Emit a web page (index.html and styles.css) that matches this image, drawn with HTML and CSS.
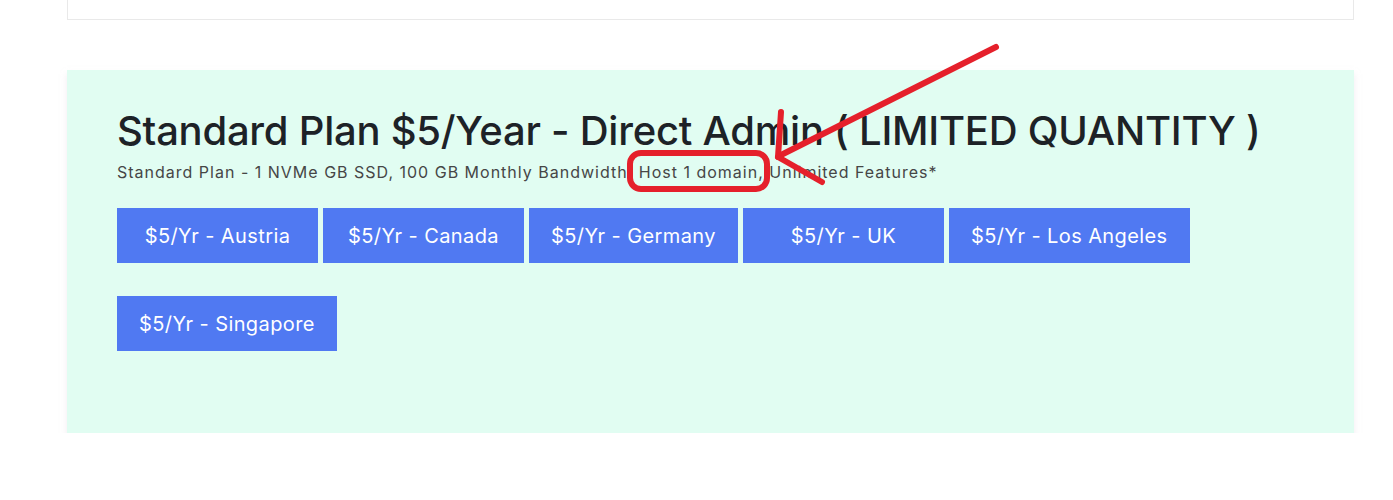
FILE: index.html
```html
<!DOCTYPE html>
<html lang="en">

<head>
    <meta charset="UTF-8">
    <meta name="viewport" content="width=device-width, initial-scale=1.0">
    <link rel="stylesheet" href="styles.css">
    <title>Standard Plan</title>
</head>

<body>

    <div class="top-card"></div>

    <section class="plan">
        <h2 class="plan-title">Standard Plan $5/Year - Direct Admin ( LIMITED QUANTITY )</h2>
        <p class="plan-desc">Standard Plan - 1 NVMe GB SSD, 100 GB Monthly Bandwidth, Host 1 domain, Unlimited Features*</p>

        <div class="locations">
            <a class="loc-btn" href="#">$5/Yr - Austria</a>
            <a class="loc-btn" href="#">$5/Yr - Canada</a>
            <a class="loc-btn" href="#">$5/Yr - Germany</a>
            <a class="loc-btn" href="#">$5/Yr - UK</a>
            <a class="loc-btn" href="#">$5/Yr - Los Angeles</a>
            <a class="loc-btn" href="#">$5/Yr - Singapore</a>
        </div>
    </section>

    <!-- red markup drawn on top of the screenshot -->
    <svg class="markup" width="1393" height="500" viewBox="0 0 1393 500">
        <rect x="630" y="153" width="137" height="36" rx="11" ry="11" />
        <line x1="996" y1="47" x2="779" y2="156" />
        <line x1="781" y1="112" x2="778" y2="157" />
        <line x1="778" y1="157" x2="822" y2="182" />
    </svg>

</body>

</html>
```

FILE: styles.css
```css
body {
    margin: 0;
    font-family: 'Inter', sans-serif;
    background-color: #fff;
}

.top-card {
    width: 1285px;
    height: 19px;
    margin-left: 67px;
    border: 1px solid #e9e9e9;
    border-top: none;
    background-color: #fff;
}

.plan {
    width: 1187px;
    margin: 50px 0 0 67px;
    padding: 37px 50px 82px;
    background-color: #e1fdf2;
    box-shadow: 0 4px 6px rgba(230, 220, 230, 0.5);
}

.plan-title {
    margin: 0;
    font-size: 40px;
    line-height: 48px;
    font-weight: 500;
    letter-spacing: -0.25px;
    color: #1d2227;
}

.plan-desc {
    margin: 5px 0 0;
    font-size: 16px;
    line-height: 24px;
    letter-spacing: 1px;
    color: #464646;
}

.locations {
    display: flex;
    flex-wrap: wrap;
    gap: 33px 5px;
    margin-top: 24px;
}

.loc-btn {
    display: inline-flex;
    align-items: center;
    justify-content: center;
    min-width: 157px;
    height: 55px;
    padding: 0 22px;
    background-color: #5079f2;
    color: #fff;
    font-size: 20px;
    letter-spacing: 0.4px;
    text-decoration: none;
}

.markup {
    position: absolute;
    top: 0;
    left: 0;
    pointer-events: none;
}

.markup rect,
.markup line {
    fill: none;
    stroke: #e5202b;
    stroke-width: 6;
    stroke-linecap: round;
}
```
